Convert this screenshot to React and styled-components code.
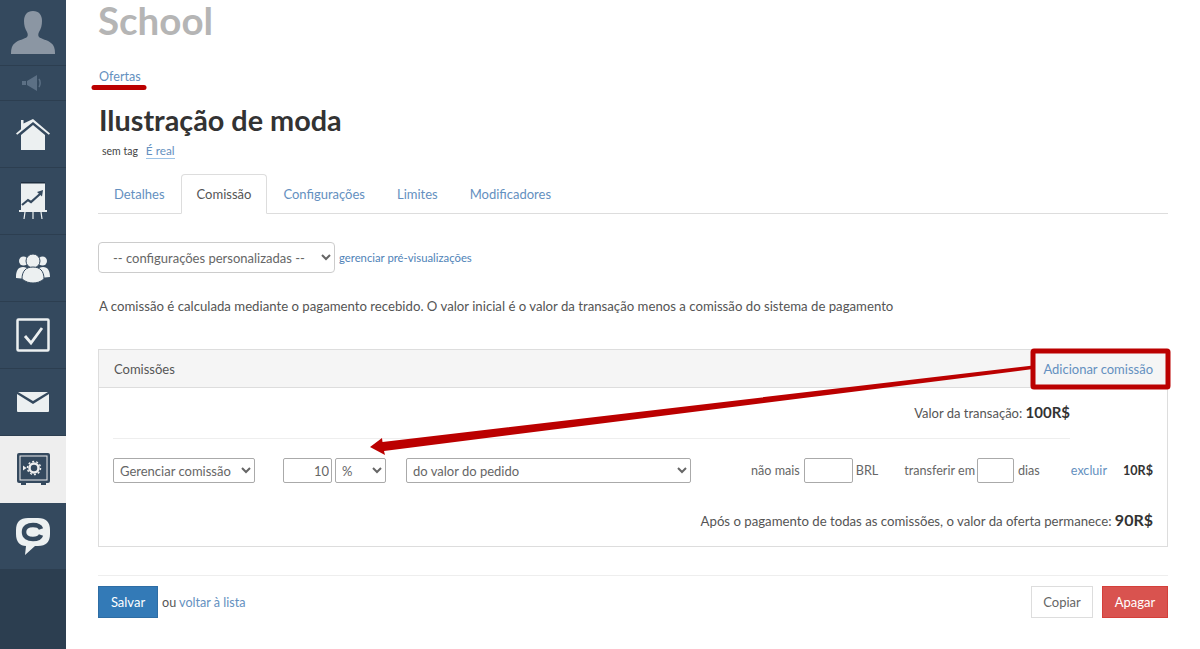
import React from 'react';
import styled, { createGlobalStyle } from 'styled-components';

const GlobalStyle = createGlobalStyle`
  html, body {
    margin: 0;
    padding: 0;
    height: 100%;
    background: #fff;
    overflow: hidden;
  }
  body {
    font-family: "Lato", "Open Sans", "Liberation Sans", sans-serif;
    font-size: 13.2px;
    color: #555;
  }
`;

const Page = styled.div`
  position: relative;
  display: flex;
  width: 1200px;
  height: 649px;
  overflow: hidden;
`;

const Sidebar = styled.nav`
  width: 66px;
  height: 649px;
  flex: none;
  display: flex;
  flex-direction: column;
  background: #2c3e50;
`;

const SideItem = styled.div`
  height: ${(p) => p.$height || 67}px;
  box-sizing: border-box;
  display: flex;
  align-items: center;
  justify-content: center;
  flex: none;
  background: ${(p) => (p.$active ? '#eeeeee' : '#34495e')};
  border-bottom: 1px solid ${(p) => (p.$active ? '#eeeeee' : '#2c3e50')};
  color: ${(p) => (p.$active ? '#34495e' : '#ecf0f1')};
`;

const Main = styled.main`
  width: 1070px;
  margin-left: 32px;
  flex: none;
  display: flex;
  flex-direction: column;
`;

const SchoolName = styled.div`
  height: 40px;
  line-height: 40px;
  font-size: 38.5px;
  font-weight: 700;
  color: #b5b5b5;
`;

const Crumb = styled.a`
  margin-top: 28px;
  margin-left: 1px;
  height: 18px;
  line-height: 18px;
  font-size: 12.6px;
  color: #6490c0;
`;

const Title = styled.h1`
  margin: 17px 0 0 1px;
  height: 34px;
  line-height: 34px;
  font-size: 28.8px;
  font-weight: 700;
  color: #333;
`;

const TagRow = styled.div`
  display: flex;
  gap: 8px;
  margin: 6px 0 0 4px;
  height: 18px;
  line-height: 16px;
  font-size: 10.5px;
  color: #444;
`;

const RealTag = styled.span`
  font-size: 11.8px;
  color: #6490c0;
  border-bottom: 1px solid #9cc3e6;
  height: 15px;
`;

const Tabs = styled.div`
  display: flex;
  margin-top: 13px;
  height: 40px;
  box-sizing: border-box;
  border-bottom: 1px solid #ddd;
`;

const Tab = styled.div`
  box-sizing: border-box;
  height: 40px;
  padding: 0 15px;
  line-height: 38px;
  font-size: 13px;
  color: ${(p) => (p.$active ? '#555' : '#6490c0')};
  background: ${(p) => (p.$active ? '#fff' : 'transparent')};
  border: 1px solid ${(p) => (p.$active ? '#ddd' : 'transparent')};
  border-bottom-color: ${(p) => (p.$active ? '#fff' : 'transparent')};
  border-radius: 4px 4px 0 0;
`;

const PresetRow = styled.div`
  display: flex;
  align-items: center;
  gap: 4px;
  margin-top: 28px;
`;

const PresetSelect = styled.select`
  width: 237px;
  height: 31px;
  padding: 0 10px;
  font: inherit;
  font-size: 13px;
  color: #666;
  background: #fff;
  border: 1px solid #ccc;
  border-radius: 4px;
`;

const SmallLink = styled.a`
  font-size: 11.3px;
  color: #4f83b8;
`;

const Note = styled.p`
  margin: 23px 0 0 1px;
  height: 20px;
  line-height: 20px;
  font-size: 13.2px;
  color: #555;
`;

const Panel = styled.section`
  margin-top: 33px;
  height: 198px;
  box-sizing: border-box;
  border: 1px solid #ddd;
  display: flex;
  flex-direction: column;
`;

const PanelHead = styled.header`
  display: flex;
  align-items: center;
  justify-content: space-between;
  flex: none;
  box-sizing: border-box;
  height: 38px;
  padding: 0 14px 0 15px;
  background: #f5f5f5;
  border-bottom: 1px solid #ddd;
`;

const PanelTitle = styled.span`
  font-size: 13px;
  color: #555;
`;

const PanelLink = styled.a`
  font-size: 13px;
  color: #6490c0;
`;

const PanelBody = styled.div`
  padding: 0 14px;
  display: flex;
  flex-direction: column;
`;

const TotalLine = styled.div`
  text-align: right;
  color: #555;
  height: ${(p) => p.$height}px;
  line-height: ${(p) => p.$height - (p.$lift || 0)}px;
  width: ${(p) => p.$width || 'auto'};
  font-size: ${(p) => p.$size || 13.2}px;
`;

const Amount = styled.b`
  font-size: ${(p) => p.$size || 15}px;
  font-weight: 700;
  color: #333;
`;

const Divider = styled.hr`
  width: 957px;
  margin: 0;
  border: 0;
  border-top: 1px solid #eee;
`;

const CommissionRow = styled.div`
  display: flex;
  align-items: center;
  height: 25px;
  margin-top: 19px;
  font-size: 12.6px;
  color: #666;
`;

const RowSelect = styled.select`
  box-sizing: border-box;
  width: ${(p) => p.$width}px;
  height: 25px;
  margin-left: ${(p) => p.$gap || 0}px;
  padding: 0 2px;
  font: inherit;
  font-size: 13px;
  color: #666;
  background: #fff;
  border: 1px solid #aaa;
  border-radius: 2px;
`;

const RowInput = styled.input`
  box-sizing: border-box;
  width: ${(p) => p.$width}px;
  height: 25px;
  margin-left: ${(p) => p.$gap || 0}px;
  padding: 0 2px;
  font: inherit;
  font-size: 13px;
  color: #666;
  text-align: right;
  background: #fff;
  border: 1px solid #aaa;
  border-radius: 2px;
`;

const RowText = styled.span`
  margin-left: ${(p) => p.$gap || 0}px;
  white-space: nowrap;
`;

const RowLink = styled.a`
  margin-left: auto;
  color: #6490c0;
`;

const RowAmount = styled.b`
  margin-left: 16px;
  font-weight: 700;
  color: #333;
`;

const Footer = styled.footer`
  margin-top: 28px;
  padding-top: 10px;
  border-top: 1px solid #eee;
  display: flex;
  align-items: center;
  height: 32px;
`;

const Button = styled.button`
  box-sizing: border-box;
  height: 32px;
  width: ${(p) => p.$width}px;
  margin-left: ${(p) => p.$gap || 0}px;
  padding: 0;
  font: inherit;
  font-size: 13px;
  color: ${(p) => p.$color};
  background: ${(p) => p.$bg};
  border: 1px solid ${(p) => p.$border};
`;

const BackText = styled.span`
  margin-left: 4px;
  font-size: 12.6px;
  color: #555;
`;

const BackLink = styled.a`
  color: #6490c0;
`;

const Spacer = styled.div`
  flex: 1;
`;

const Annotation = styled.svg`
  position: absolute;
  inset: 0;
  pointer-events: none;
`;

const PersonIcon = () => (
  <svg width="44" height="44" viewBox="0 0 44 44" fill="#8b96a3">
    <path d="M22 0c-6 0-9 4-9 10 0 4 1 8 3 11 1 2 1 4 0 5-2 2-9 3-12 6-3 2-4 6-4 10v1h44v-1c0-4-1-8-4-10-3-3-10-4-12-6-1-1-1-3 0-5 2-3 3-7 3-11 0-6-3-10-9-10z" />
  </svg>
);

const SpeakerIcon = () => (
  <svg width="22" height="16" viewBox="0 0 22 16" fill="#5c7085">
    <path d="M0 6h4v4H0zM5 6l10-6v16L5 10z" />
    <path d="M17 4c1.500 2 1.500 6 0 8" fill="none" stroke="#5c7085" strokeWidth="1.500" />
  </svg>
);

const HomeIcon = () => (
  <svg width="34" height="31" viewBox="0 0 34 31" fill="#ecf0f1">
    <path d="M5 1h2.500v3.500L17 0l17 14.500-1.200 1.300L17 3 1.200 15.800 0 14.500l5-4.300z" />
    <path d="M5 16L17 6l12 10v15H5z" />
  </svg>
);

const ChartIcon = () => (
  <svg width="28" height="38" viewBox="0 0 28 38">
    <rect x="2" y="0" width="24" height="28" fill="#ecf0f1" />
    <rect x="2" y="0" width="24" height="1.500" fill="#1f2f40" />
    <path d="M3 23l6-5 3 2 9-8" fill="none" stroke="#34495e" strokeWidth="2.200" />
    <path d="M24 8l-1 6.500-5-4.500z" fill="#34495e" />
    <rect x="0" y="28" width="28" height="2" fill="#ecf0f1" />
    <path d="M6 30l-1 7M14 30v7M22 30l1 7" stroke="#ecf0f1" strokeWidth="1.200" />
  </svg>
);

const UsersIcon = () => (
  <svg width="34" height="30" viewBox="0 0 34 30" fill="#ecf0f1">
    <circle cx="7.500" cy="8" r="4.500" />
    <circle cx="26.500" cy="8" r="4.500" />
    <path d="M0 24c0-6 2-10 7-10s7 4 7 10l-4 2-10-1zM20 24c0-6 2-10 7-10s7 4 7 10l-10 1z" />
    <circle cx="17" cy="8" r="7" stroke="#34495e" strokeWidth="1" />
    <path d="M6 26c0-8 4-12 11-12s11 4 11 12c-4 3-7 4-11 4s-7-1-11-4z" stroke="#34495e" strokeWidth="1" />
  </svg>
);

const CheckIcon = () => (
  <svg width="34" height="34" viewBox="0 0 34 34">
    <rect x="1.500" y="1.500" width="31" height="31" rx="1" fill="#34495e" stroke="#ecf0f1" strokeWidth="2.500" />
    <path d="M9 18l6 7 11-15" fill="none" stroke="#ecf0f1" strokeWidth="2.800" />
  </svg>
);

const MailIcon = () => (
  <svg width="32" height="20" viewBox="0 0 32 20" fill="#ecf0f1">
    <path d="M1 0h30L16 9z" />
    <path d="M0 2l16 10L32 2v17a1 1 0 0 1-1 1H1a1 1 0 0 1-1-1z" />
  </svg>
);

const SafeIcon = () => (
  <svg width="33" height="32" viewBox="0 0 33 32">
    <rect x="0" y="0" width="33" height="30" rx="2" fill="#34495e" />
    <rect x="3" y="3" width="27" height="24" fill="none" stroke="#eeeeee" strokeWidth="1" />
    <rect x="4" y="30" width="5" height="2" fill="#34495e" />
    <rect x="24" y="30" width="5" height="2" fill="#34495e" />
    <circle cx="17" cy="15" r="4.500" fill="none" stroke="#eeeeee" strokeWidth="2.500" />
    <circle cx="17" cy="15" r="6.500" fill="none" stroke="#eeeeee" strokeWidth="1.500" strokeDasharray="2 2" />
    <path d="M6 12.500l3.500 2.500-3.500 2.500z" fill="#eeeeee" />
  </svg>
);

const ChatIcon = () => (
  <svg width="34" height="37" viewBox="0 0 34 37">
    <path d="M12 0h10c8 0 12 4 12 12v4c0 8-4 12-12 12h-3l-10 9 1-9C4 28 0 24 0 16v-4C0 4 4 0 12 0z" fill="#ecf0f1" />
    <path d="M25 11c-1-3-4-4-8-4-5 0-9 2-9 7s4 7 9 7c4 0 7-1 8-4" fill="none" stroke="#34495e" strokeWidth="4.500" />
  </svg>
);

const App = () => {
  return (
    <Page>
      <GlobalStyle />
      <Sidebar>
        <SideItem $height={66}><PersonIcon /></SideItem>
        <SideItem $height={35}><SpeakerIcon /></SideItem>
        <SideItem><HomeIcon /></SideItem>
        <SideItem><ChartIcon /></SideItem>
        <SideItem><UsersIcon /></SideItem>
        <SideItem><CheckIcon /></SideItem>
        <SideItem><MailIcon /></SideItem>
        <SideItem $active><SafeIcon /></SideItem>
        <SideItem><ChatIcon /></SideItem>
      </Sidebar>
      <Main>
        <SchoolName>School</SchoolName>
        <Crumb>Ofertas</Crumb>
        <Title>Ilustração de moda</Title>
        <TagRow>
          <span>sem tag</span>
          <RealTag>É real</RealTag>
        </TagRow>
        <Tabs>
          <Tab>Detalhes</Tab>
          <Tab $active>Comissão</Tab>
          <Tab>Configurações</Tab>
          <Tab>Limites</Tab>
          <Tab>Modificadores</Tab>
        </Tabs>
        <PresetRow>
          <PresetSelect>
            <option>-- configurações personalizadas --</option>
          </PresetSelect>
          <SmallLink>gerenciar pré-visualizações</SmallLink>
        </PresetRow>
        <Note>
          A comissão é calculada mediante o pagamento recebido. O valor inicial é o valor da transação menos a comissão do sistema de pagamento
        </Note>
        <Panel>
          <PanelHead>
            <PanelTitle>Comissões</PanelTitle>
            <PanelLink>Adicionar comissão</PanelLink>
          </PanelHead>
          <PanelBody>
            <TotalLine $height={50} $lift={2} $width="957px" $size={13}>
              Valor da transação: <Amount>100R$</Amount>
            </TotalLine>
            <Divider />
            <CommissionRow>
              <RowSelect $width={142}><option>Gerenciar comissão</option></RowSelect>
              <RowInput $width={49} $gap={28} defaultValue="10" />
              <RowSelect $width={51} $gap={3}><option>%</option></RowSelect>
              <RowSelect $width={285} $gap={20}><option>do valor do pedido</option></RowSelect>
              <RowText $gap={60}>não mais</RowText>
              <RowInput $width={49} $gap={4} />
              <RowText $gap={3}>BRL</RowText>
              <RowText $gap={26}>transferir em</RowText>
              <RowInput $width={37} $gap={2} />
              <RowText $gap={4}>dias</RowText>
              <RowLink>excluir</RowLink>
              <RowAmount>10R$</RowAmount>
            </CommissionRow>
            <TotalLine $height={74}>
              Após o pagamento de todas as comissões, o valor da oferta permanece: <Amount $size={16}>90R$</Amount>
            </TotalLine>
          </PanelBody>
        </Panel>
        <Footer>
          <Button $width={60} $color="#fff" $bg="#337ab7" $border="#2e6da4">Salvar</Button>
          <BackText>ou <BackLink>voltar à lista</BackLink></BackText>
          <Spacer />
          <Button $width={62} $color="#666" $bg="#fff" $border="#ddd">Copiar</Button>
          <Button $width={66} $gap={9} $color="#fff" $bg="#d9534f" $border="#d43f3a">Apagar</Button>
        </Footer>
      </Main>
      <Annotation width="1200" height="649" viewBox="0 0 1200 649">
        <path d="M94 87.500h50" stroke="#bb0000" strokeWidth="5" strokeLinecap="round" />
        <rect x="1033" y="351" width="135" height="36" rx="1" fill="none" stroke="#bb0000" strokeWidth="5" />
        <path d="M1033 365.500L1033 369L384 451L385 455L370 447L382 438L382.500 442Z" fill="#bb0000" />
      </Annotation>
    </Page>
  );
};

export default App;
